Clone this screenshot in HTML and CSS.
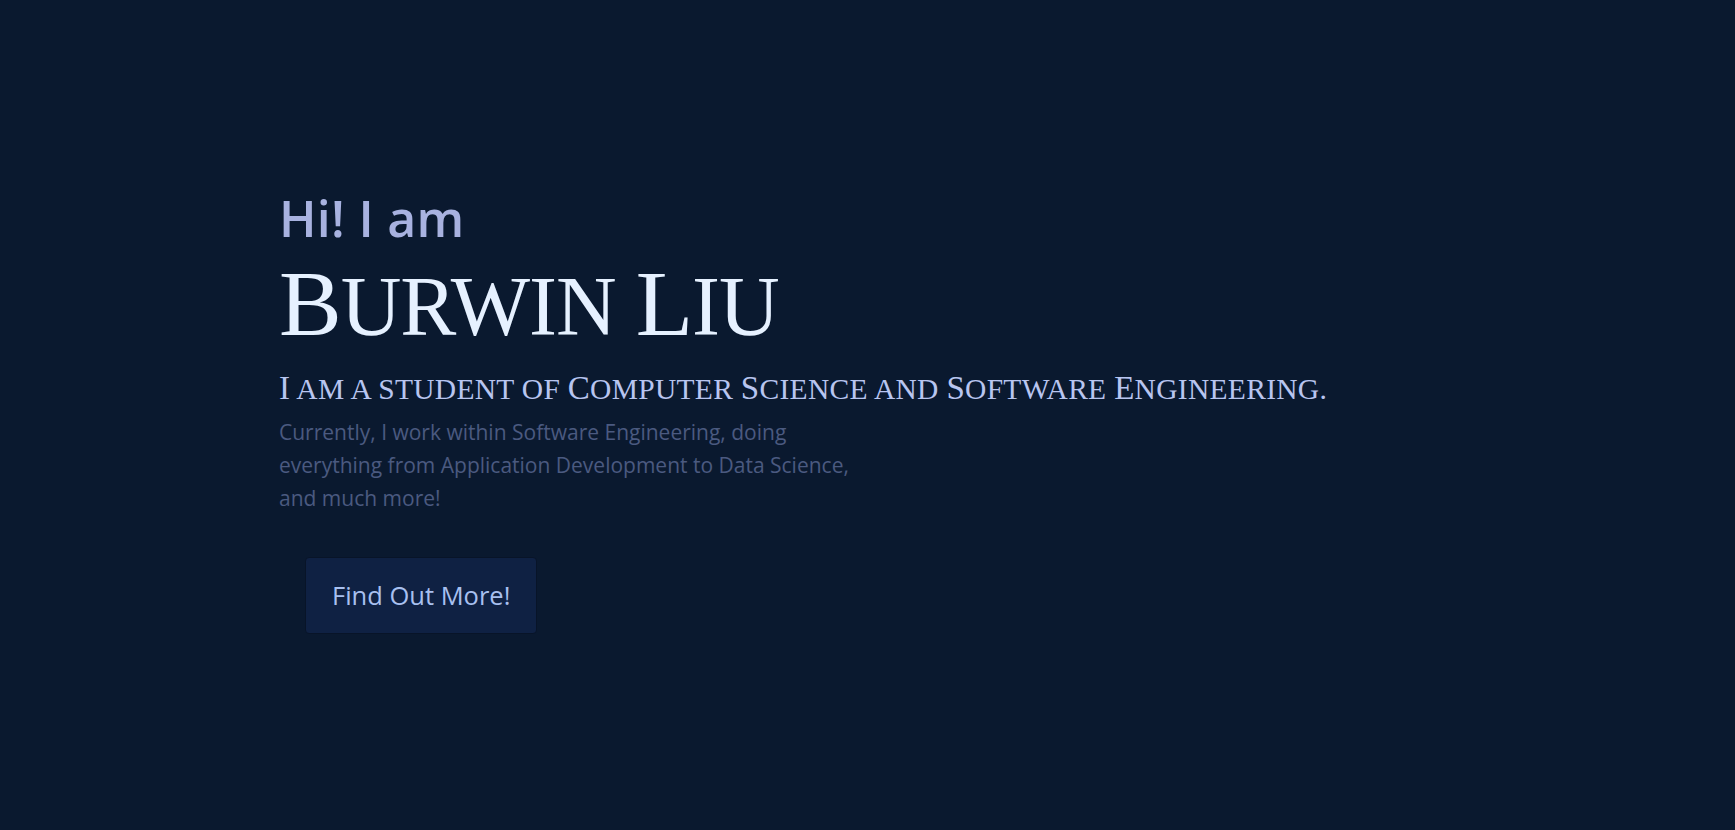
FILE: index.html
```html
<!DOCTYPE html>
<html lang="en">
<head>
<meta charset="utf-8">
<title>Burwin Liu</title>
<link rel="stylesheet" href="styles.css">
</head>
<body>
<main class="hero">
  <h2 class="greeting">Hi! I am</h2>
  <h1 class="name"><span class="init">B</span>urwin <span class="init">L</span>iu</h1>
  <h3 class="tagline"><span class="init">I</span> am a student of <span class="init">C</span>omputer <span class="init">S</span>cience and <span class="init">S</span>oftware <span class="init">E</span>ngineering.</h3>
  <p class="intro">Currently, I work within Software Engineering, doing everything from Application Development to Data Science, and much more!</p>
  <div class="actions">
    <a class="btn" href="#about">Find Out More!</a>
  </div>
</main>
</body>
</html>
```
FILE: styles.css
```css
html, body {
  margin: 0;
  padding: 0;
  background: #0a192f;
}
body {
  font-family: "Open Sans", "Noto Sans", sans-serif;
}
.hero {
  box-sizing: border-box;
  min-height: 830px;
  display: flex;
  flex-direction: column;
  justify-content: center;
  align-items: flex-start;
  padding: 0 0 8px 279px;
}
.greeting {
  margin: 0 0 5px;
  font-family: "Open Sans", sans-serif;
  font-weight: 600;
  font-size: 50px;
  line-height: 60px;
  color: #a8b2e0;
  letter-spacing: 0.3px;
}
.name {
  margin: 0;
  font-family: "Liberation Serif", serif;
  text-transform: uppercase;
  font-weight: 400;
  font-size: 84px;
  line-height: 100px;
  color: #e6f1ff;
  letter-spacing: -1px;
}
.name .init {
  font-size: 94px;
}
.tagline {
  margin: 10px 0 0;
  font-family: "Liberation Serif", serif;
  text-transform: uppercase;
  font-weight: 400;
  font-size: 29.5px;
  line-height: 42px;
  color: #b8c5f0;
  letter-spacing: 0.3px;
}
.tagline .init {
  font-size: 33px;
}
.intro {
  margin: 6px 0 0;
  max-width: 580px;
  font-family: "Open Sans", sans-serif;
  font-size: 21px;
  line-height: 33px;
  color: #4b5a80;
}
.actions {
  margin-top: 42px;
  padding-left: 26px;
}
.btn {
  display: inline-block;
  padding: 20px 26px 21px;
  font-family: "Open Sans", sans-serif;
  font-size: 25.5px;
  line-height: 34px;
  color: #a8c0f0;
  background: #0f2143;
  border: 1px solid #081428;
  border-radius: 4px;
  text-decoration: none;
}
```
